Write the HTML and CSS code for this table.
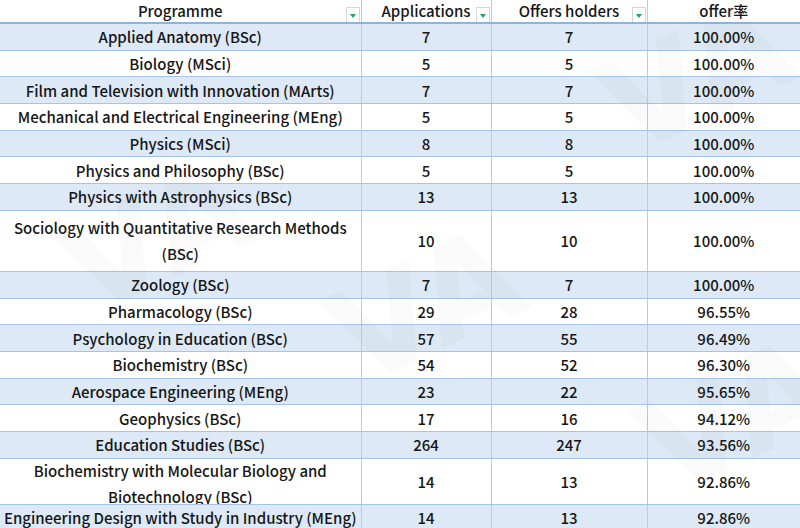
FILE: index.html
```html
<!DOCTYPE html>
<html>
<head>
<meta charset="utf-8">
<link rel="stylesheet" href="styles.css">
</head>
<body>
<div class="sheet">
<table class="grid">
<colgroup><col class="c1"><col class="c2"><col class="c3"><col class="c4"></colgroup>
<thead>
<tr class="head">
<th><span>Programme</span><i class="filter"></i></th>
<th><span>Applications</span><i class="filter"></i></th>
<th><span>Offers holders</span><i class="filter"></i></th>
<th><span>offer率</span></th>
</tr>
</thead>
<tbody>
<tr class="row alt"><td>Applied Anatomy (BSc)</td><td>7</td><td>7</td><td>100.00%</td></tr>
<tr class="row"><td>Biology (MSci)</td><td>5</td><td>5</td><td>100.00%</td></tr>
<tr class="row alt"><td>Film and Television with Innovation (MArts)</td><td>7</td><td>7</td><td>100.00%</td></tr>
<tr class="row"><td>Mechanical and Electrical Engineering (MEng)</td><td>5</td><td>5</td><td>100.00%</td></tr>
<tr class="row alt"><td>Physics (MSci)</td><td>8</td><td>8</td><td>100.00%</td></tr>
<tr class="row"><td>Physics and Philosophy (BSc)</td><td>5</td><td>5</td><td>100.00%</td></tr>
<tr class="row alt"><td>Physics with Astrophysics (BSc)</td><td>13</td><td>13</td><td>100.00%</td></tr>
<tr class="row tall"><td>Sociology with Quantitative Research Methods (BSc)</td><td>10</td><td>10</td><td>100.00%</td></tr>
<tr class="row alt"><td>Zoology (BSc)</td><td>7</td><td>7</td><td>100.00%</td></tr>
<tr class="row"><td>Pharmacology (BSc)</td><td>29</td><td>28</td><td>96.55%</td></tr>
<tr class="row alt"><td>Psychology in Education (BSc)</td><td>57</td><td>55</td><td>96.49%</td></tr>
<tr class="row"><td>Biochemistry (BSc)</td><td>54</td><td>52</td><td>96.30%</td></tr>
<tr class="row alt"><td>Aerospace Engineering (MEng)</td><td>23</td><td>22</td><td>95.65%</td></tr>
<tr class="row"><td>Geophysics (BSc)</td><td>17</td><td>16</td><td>94.12%</td></tr>
<tr class="row alt"><td>Education Studies (BSc)</td><td>264</td><td>247</td><td>93.56%</td></tr>
<tr class="row mid"><td><div class="clip">Biochemistry with Molecular Biology and Biotechnology (BSc)</div></td><td>14</td><td>13</td><td>92.86%</td></tr>
<tr class="row alt"><td>Engineering Design with Study in Industry (MEng)</td><td>14</td><td>13</td><td>92.86%</td></tr>
</tbody>
</table>
<div class="wm" aria-hidden="true">
<span class="w1">VA</span><span class="w2">VA</span><span class="w3">VA</span><span class="w4">VA</span>
</div>
</div>
</body>
</html>
```

FILE: styles.css
```css
html, body {
  margin: 0;
  padding: 0;
  background: #ffffff;
}
body {
  width: 800px;
  height: 528px;
  overflow: hidden;
  font-family: "Noto Sans CJK SC", "Noto Sans", sans-serif;
  font-weight: 500;
  color: #161616;
}
.sheet {
  position: relative;
  width: 800px;
  height: 528px;
  overflow: hidden;
}
.grid {
  width: 800px;
  table-layout: fixed;
  border-collapse: collapse;
  font-size: 15px;
}
.c1 { width: 361px; }
.c2 { width: 130px; }
.c3 { width: 156px; }
.c4 { width: 153px; }
.grid th, .grid td {
  padding: 0;
  text-align: center;
  vertical-align: middle;
  border-left: 1px solid #b3cdea;
  border-bottom: 1px solid #a7c4e6;
  line-height: 25px;
  font-weight: 500;
  white-space: nowrap;
}
.grid th:first-child, .grid td:first-child { border-left: none; }
.grid td:first-child { white-space: normal; }
.head th {
  position: relative;
  height: 22px;
  line-height: 21px;
  border-bottom: 2px solid #8fb3df;
  vertical-align: top;
}
.row td { height: 25.67px; }
.row.alt td { background: #dde9f6; }
.row.tall td { height: 60.5px; line-height: 26px; }
.row.mid td { height: 45px; }
.clip {
  height: 46px;
  overflow: hidden;
  line-height: 26px;
  margin-top: -1px;
}
.filter {
  position: absolute;
  right: 1px;
  bottom: 0;
  width: 14px;
  height: 15px;
  box-sizing: border-box;
  border: 1px solid #d6d6d6;
  border-bottom: none;
  background: #ffffff;
}
.filter::after {
  content: "";
  position: absolute;
  left: 3px;
  top: 6px;
  border-left: 3.5px solid transparent;
  border-right: 3.5px solid transparent;
  border-top: 4px solid #1fa463;
}
.wm {
  position: absolute;
  inset: 0;
  pointer-events: none;
}
.wm span {
  position: absolute;
  font-family: "DejaVu Sans", sans-serif;
  font-weight: 700;
  font-size: 130px;
  color: rgba(120, 120, 120, 0.04);
  transform: rotate(-25deg);
}
.w1 { left: 60px; top: 160px; }
.w2 { left: 330px; top: 230px; }
.w3 { left: 600px; top: 0px; }
.w4 { left: 640px; top: 340px; }
```
